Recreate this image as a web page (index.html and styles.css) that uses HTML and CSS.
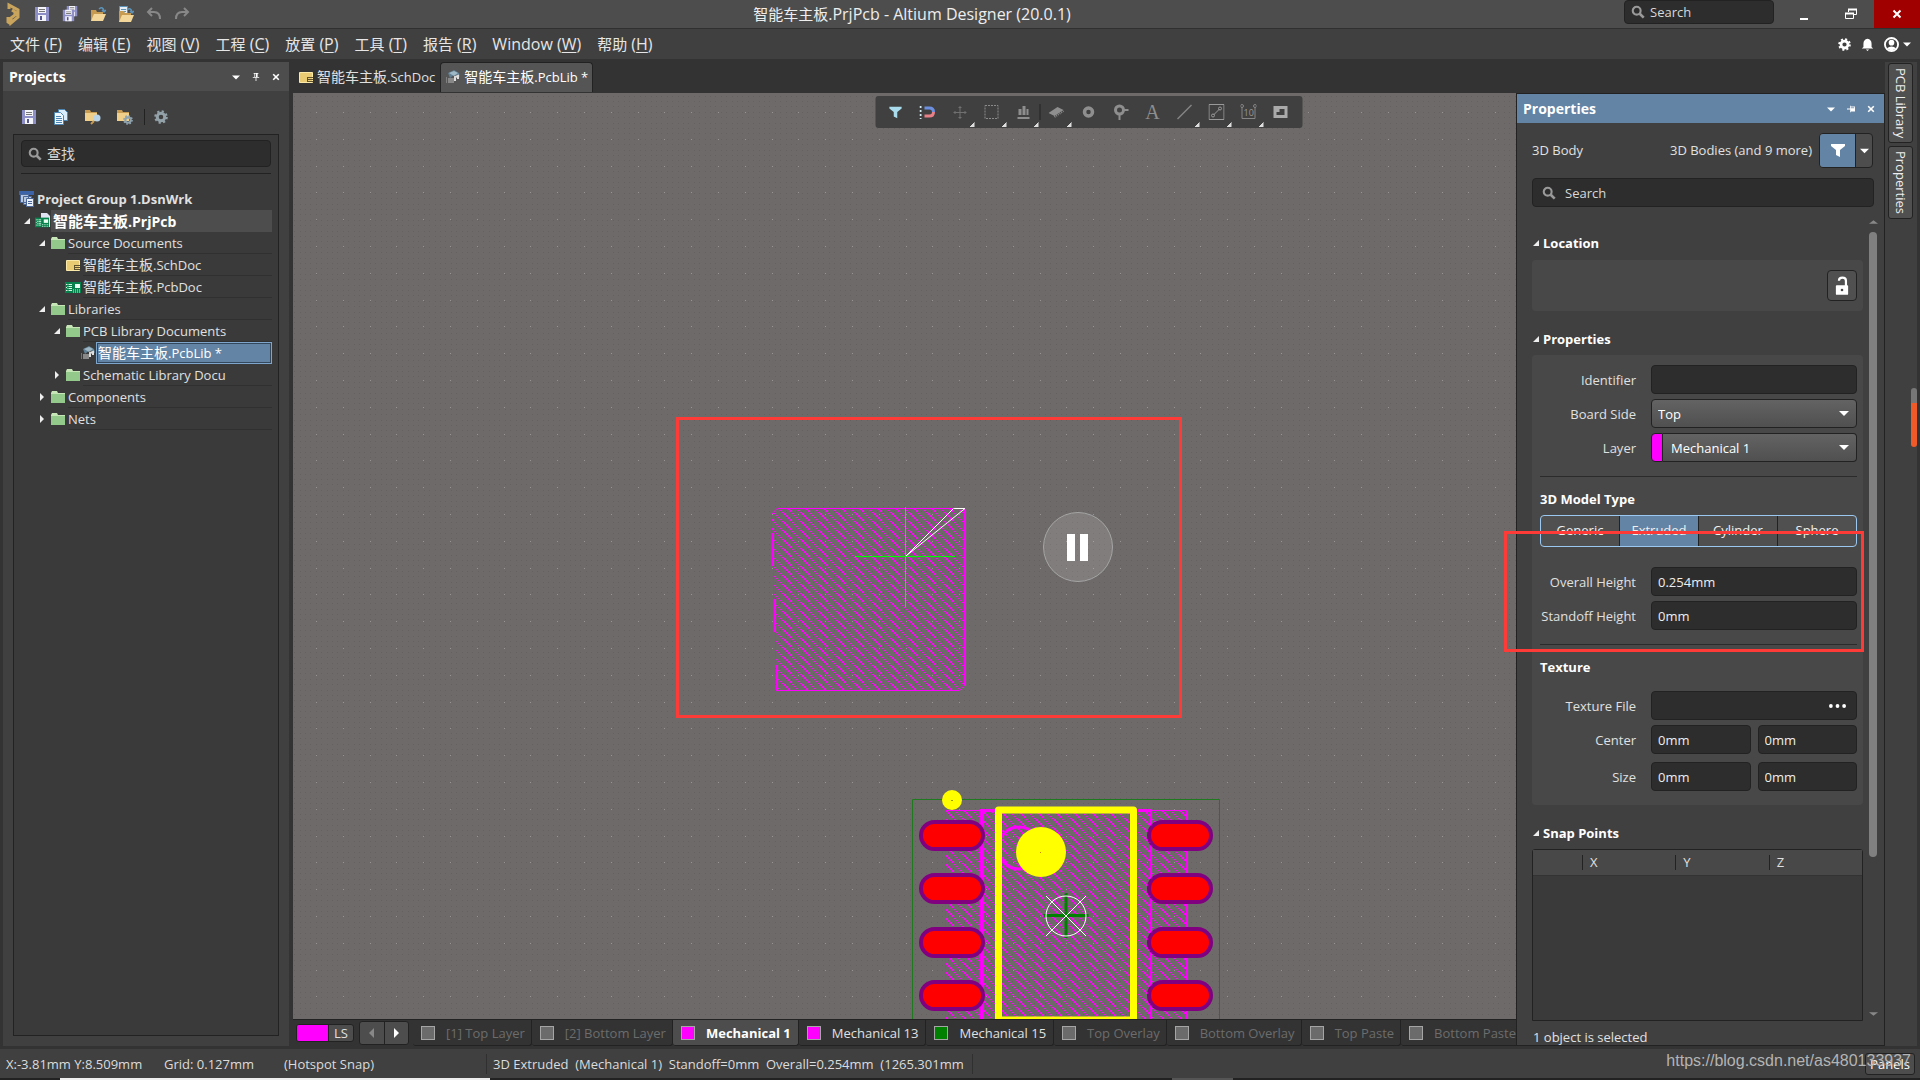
FILE: index.html
```html
<!DOCTYPE html>
<html lang="zh-CN">
<head>
<meta charset="utf-8">
<title>智能车主板.PrjPcb - Altium Designer (20.0.1)</title>
<link rel="stylesheet" href="styles.css">
</head>
<body>
<svg class="defs" width="0" height="0" aria-hidden="true">
  <defs>
    <symbol id="save" viewBox="0 0 16 16"><path fill="#8f8fc8" d="M1 1h14v14H1z"/><path fill="#f4f4fb" d="M4 1h8v6H4zM4 9h8v6H4z"/><path fill="#777" d="M5 3h6v1H5zM5 5h6v1H5z"/><path fill="#555590" d="M6 10h2v4H6z"/></symbol>
    <symbol id="folder" viewBox="0 0 16 16"><path fill="#c7e6b8" d="M1 4l1-2h5l1 2h7v10H1z"/><path fill="#93c98a" d="M1 5h14v9H1z"/></symbol>
    <symbol id="sch" viewBox="0 0 16 16"><path fill="#e9cb74" stroke="#fbe9a9" d="M1.500 3.500h13v10h-13z"/><path fill="#5e512c" d="M9 8h6v1H9zM9 10h6v1H9zM9 12h6v1H9zM9 8h1v5H9z"/></symbol>
    <symbol id="pcb" viewBox="0 0 16 16"><path fill="#07824d" d="M0 3h16v11H0z"/><path stroke="#cff3df" stroke-dasharray="1 1" d="M3 5v8M8 11h7M8 13h7"/><path stroke="#d8f5e4" d="M4 5.500h3M4 7.500h3M4 9.500h3M4 11.500h3M1 5.500h1M1 8.500h1M1 11.500h1"/><path fill="#e6fff1" d="M10 5h5v4h-5z"/></symbol>
    <symbol id="pcblib" viewBox="0 0 16 16"><path fill="#5f7f94" d="M3 4l6-3 5 3 1 4-5-3-5 4z"/><path fill="#9fb8c6" d="M4 4l5-2 4 2-4 3z"/><path fill="none" stroke="#ddd" stroke-width="2" d="M10 12V8l3-1v3"/><path fill="#888" d="M3 9h6v5H3z"/><path fill="#444" stroke="#aaa" d="M1 9h1M1 11h1M1 13h1"/></symbol>
    <symbol id="magnifier" viewBox="0 0 16 16"><circle cx="6.500" cy="6.500" r="4.500" fill="none" stroke="#9a9a9a" stroke-width="2.400"/><path stroke="#9a9a9a" stroke-width="3" d="M10 10l4.500 4.500"/></symbol>
    <symbol id="openfolder" viewBox="0 0 16 16"><path fill="#c79c52" d="M1 4h5l1 2h6v9H1z"/><path fill="#f3d79a" d="M4 8h12l-3 7H1z"/><path fill="none" stroke="#5d93b9" stroke-width="1.500" d="M9 3q4-3 5 2M12 4l2 2 2-2"/></symbol>
    <symbol id="cog" viewBox="0 0 16 16"><circle cx="8" cy="8" r="4.300" fill="none" stroke="currentColor" stroke-width="3.400"/><circle cx="8" cy="8" r="6.500" fill="none" stroke="currentColor" stroke-width="2.500" stroke-dasharray="2.500 2.600"/></symbol>
    <symbol id="folderbase" viewBox="0 0 16 16"><path fill="#c79c52" d="M0 1h5l1 2h6v9H0z"/><path fill="#f0cf8a" d="M0 4h12v8H0z"/></symbol>
    <symbol id="caret" viewBox="0 0 10 10"><path fill="currentColor" d="M0 3h10L5 8z"/></symbol>
    <symbol id="cross" viewBox="0 0 10 10"><path stroke="currentColor" stroke-width="2" d="M1.500 1.500l7 7M8.500 1.500l-7 7"/></symbol>
    <symbol id="opened" viewBox="0 0 8 8"><path fill="#eee" d="M7 1v6H1z"/></symbol>
    <symbol id="closed" viewBox="0 0 8 8"><path fill="#eee" d="M2 0l4 4-4 4z"/></symbol>
    <symbol id="funnel" viewBox="0 0 16 16"><path fill="currentColor" d="M1 2h14v2l-5 4v7l-4-2V8L1 4z"/></symbol>
  </defs>
</svg>

<header class="titlebar">
  <div class="quick">
    <svg class="logo" viewBox="0 0 16 24"><path fill="none" stroke="#c9a45c" stroke-width="3" d="M3 7V3l9 5v7l-7 6v-5l4-3V10L6 8M5 22l-3-2v-5"/></svg>
    <button class="iconbtn" aria-label="Save"><svg viewBox="0 0 16 16"><use href="#save"/></svg></button>
    <button class="iconbtn" aria-label="Save all"><svg viewBox="0 0 16 16"><use href="#save" x="4" y="-1" width="12" height="12"/><use href="#save" x="0" y="3" width="13" height="13"/></svg></button>
    <button class="iconbtn" aria-label="Open"><svg viewBox="0 0 16 16"><use href="#openfolder"/></svg></button>
    <button class="iconbtn" aria-label="Open project"><svg viewBox="0 0 16 16"><path fill="#e5eef5" stroke="#5d93b9" d="M1.500.5h8v11h-8z"/><path stroke="#5d93b9" d="M3 3.500h5M3 5.500h5"/><use href="#openfolder" y="1"/></svg></button>
    <button class="iconbtn" aria-label="Undo"><svg viewBox="0 0 16 16"><path fill="none" stroke="#888" stroke-width="2" d="M2 6h6q6 0 6 7M6 2L2 6l4 4"/></svg></button>
    <button class="iconbtn" aria-label="Redo"><svg viewBox="0 0 16 16"><path fill="none" stroke="#888" stroke-width="2" d="M14 6H8q-6 0-6 7M10 2l4 4-4 4"/></svg></button>
  </div>
  <h1 class="apptitle"><span class="zh">智能车主板</span>.PrjPcb - Altium Designer (20.0.1)</h1>
  <div class="winctl">
    <label class="search search-top"><svg viewBox="0 0 16 16"><use href="#magnifier"/></svg><input type="text" placeholder="Search" aria-label="Search"></label>
    <button class="win" aria-label="Minimize"><svg viewBox="0 0 12 12"><path fill="#fff" d="M2 10h8v2H2z"/></svg></button>
    <button class="win" aria-label="Restore"><svg viewBox="0 0 12 12"><path fill="none" stroke="#fff" d="M3.500 4V1.500h8v5H9M.5 5.500h8v5h-8z"/><path stroke="#fff" stroke-width="2" d="M3 1.500h9M0 5.500h9"/></svg></button>
    <button class="win close" aria-label="Close"><svg viewBox="0 0 10 10"><use href="#cross"/></svg></button>
  </div>
</header>

<nav class="menubar">
  <a href="#"><span class="zh">文件</span> (<u>F</u>)</a><a href="#"><span class="zh">编辑</span> (<u>E</u>)</a><a href="#"><span class="zh">视图</span> (<u>V</u>)</a><a href="#"><span class="zh">工程</span> (<u>C</u>)</a><a href="#"><span class="zh">放置</span> (<u>P</u>)</a><a href="#"><span class="zh">工具</span> (<u>T</u>)</a><a href="#"><span class="zh">报告</span> (<u>R</u>)</a><a href="#">Window (<u>W</u>)</a><a href="#"><span class="zh">帮助</span> (<u>H</u>)</a>
  <div class="account">
    <button class="iconbtn" aria-label="Settings"><svg viewBox="0 0 16 16"><use href="#cog"/></svg></button>
    <button class="iconbtn" aria-label="Notifications"><svg viewBox="0 0 16 16"><path fill="#fff" d="M8 1q5 1 5 6v4l2 2H1l2-2V7q0-5 5-6zM6 14h4l-2 2z"/></svg></button>
    <button class="iconbtn user" aria-label="Account"><svg viewBox="0 0 16 16"><circle cx="8" cy="8" r="7" fill="none" stroke="#fff" stroke-width="2"/><circle cx="8" cy="6" r="3" fill="#fff"/><path fill="#fff" d="M3 12q5-4 10 0l-5 3z"/></svg><svg class="tiny" viewBox="0 0 10 10"><use href="#caret"/></svg></button>
  </div>
</nav>

<main class="main">
  <aside class="projects">
    <div class="panelhead">
      <h2>Projects</h2>
      <button aria-label="Panel menu"><svg viewBox="0 0 10 10"><use href="#caret"/></svg></button>
      <button aria-label="Pin"><svg viewBox="0 0 10 10"><path fill="currentColor" d="M2 0h6v1H7v4h2v1H1V5h2V1H2zM4.500 6h1v4h-1z"/><path fill="#4d4d4d" d="M4 1h1v4H4z"/></svg></button>
      <button aria-label="Close panel"><svg viewBox="0 0 10 10"><use href="#cross"/></svg></button>
    </div>
    <div class="tools">
      <button class="iconbtn" aria-label="Save"><svg viewBox="0 0 16 16"><use href="#save"/></svg></button>
      <button class="iconbtn" aria-label="Compile"><svg viewBox="0 0 16 16"><path fill="#d9ecfa" stroke="#4d86b3" d="M5.500.5h6l3 3v8h-9z"/><path fill="#eef7fd" stroke="#4d86b3" d="M1.500 3.500h6l3 3v9h-9z"/><path stroke="#4d86b3" d="M3 7.500h5M3 9.500h6M3 11.500h6M3 13.500h6"/></svg></button>
      <button class="iconbtn" aria-label="Explore"><svg viewBox="0 0 16 16"><use href="#folderbase"/><circle cx="12" cy="9" r="3.500" fill="#b9d4e8"/><path stroke="#c79c52" stroke-width="2" d="M9 12l-3 3"/></svg></button>
      <button class="iconbtn" aria-label="Project options"><svg viewBox="0 0 16 16"><use href="#folderbase"/><g color="#8fa3ae"><use href="#cog" x="6" y="6" width="10" height="10"/></g></svg></button>
      <span class="vsep"></span>
      <button class="iconbtn gear" aria-label="Preferences"><svg viewBox="0 0 16 16"><use href="#cog"/></svg></button>
    </div>
    <div class="treebox">
      <label class="search"><svg viewBox="0 0 16 16"><use href="#magnifier"/></svg><input class="zh" type="text" placeholder="查找" aria-label="查找"></label>
      <ul class="tree">
        <li class="group"><svg viewBox="0 0 16 16"><path fill="#3c62a8" d="M0 0h15v4H0z"/><path fill="#b9c9e2" stroke="#4b6698" d="M1.500 3.500h8v8h-8zM4.500 5.500h8v8h-8z"/><path fill="#e9f0fa" stroke="#4b6698" d="M7.500 7.500h7v8h-7z"/><path stroke="#4b6698" d="M9 10.500h4M9 12.500h4"/></svg><b>Project Group 1.DsnWrk</b></li>
        <li class="prj"><svg class="arrow" viewBox="0 0 8 8"><use href="#opened"/></svg><svg viewBox="0 0 16 16"><path fill="#dfe3f2" d="M6 0h6l3 3v11H6z"/><use href="#pcb" y="2" width="14" height="14"/></svg><b class="fill"><span class="zh">智能车主板</span>.PrjPcb</b></li>
        <li class="l1"><svg class="arrow" viewBox="0 0 8 8"><use href="#opened"/></svg><svg viewBox="0 0 16 16"><use href="#folder"/></svg><span class="cell">Source Documents</span></li>
        <li class="l2"><i class="arrow"></i><svg viewBox="0 0 16 16"><use href="#sch"/></svg><span class="cell"><span class="zh">智能车主板</span>.SchDoc</span></li>
        <li class="l2"><i class="arrow"></i><svg viewBox="0 0 16 16"><use href="#pcb"/></svg><span class="cell"><span class="zh">智能车主板</span>.PcbDoc</span></li>
        <li class="l1"><svg class="arrow" viewBox="0 0 8 8"><use href="#opened"/></svg><svg viewBox="0 0 16 16"><use href="#folder"/></svg><span class="cell">Libraries</span></li>
        <li class="l2"><svg class="arrow" viewBox="0 0 8 8"><use href="#opened"/></svg><svg viewBox="0 0 16 16"><use href="#folder"/></svg><span class="cell">PCB Library Documents</span></li>
        <li class="l3"><i class="arrow"></i><svg viewBox="0 0 16 16"><use href="#pcblib"/></svg><span class="cell selected"><span class="zh">智能车主板</span>.PcbLib *</span></li>
        <li class="l2"><svg class="arrow" viewBox="0 0 8 8"><use href="#closed"/></svg><svg viewBox="0 0 16 16"><use href="#folder"/></svg><span class="cell">Schematic Library Docu</span></li>
        <li class="l1"><svg class="arrow" viewBox="0 0 8 8"><use href="#closed"/></svg><svg viewBox="0 0 16 16"><use href="#folder"/></svg><span class="cell">Components</span></li>
        <li class="l1"><svg class="arrow" viewBox="0 0 8 8"><use href="#closed"/></svg><svg viewBox="0 0 16 16"><use href="#folder"/></svg><span class="cell">Nets</span></li>
      </ul>
    </div>
  </aside>

  <section class="center">
    <div class="doctabs">
      <button class="doctab"><svg viewBox="0 0 16 16"><use href="#sch"/></svg><span><span class="zh">智能车主板</span>.SchDoc</span></button>
      <button class="doctab active"><svg viewBox="0 0 16 16"><use href="#pcblib"/></svg><span><span class="zh">智能车主板</span>.PcbLib *</span></button>
    </div>
    <div class="workspace">
      <div class="editor">
        <div class="canvas">
          <svg class="board" width="100%" height="100%" role="img" aria-label="PCB footprint">
            <defs>
              <pattern id="minor" x="316" y="112" width="27" height="27" patternUnits="userSpaceOnUse">
                <path id="dotrow" stroke="#656160" d="M0 .5h1m4 0h1m5 0h1m4 0h1m4 0h1"/>
                <use href="#dotrow" y="5"/><use href="#dotrow" y="11"/><use href="#dotrow" y="16"/><use href="#dotrow" y="21"/>
              </pattern>
              <pattern id="major" x="316" y="112" width="134" height="134" patternUnits="userSpaceOnUse">
                <path id="bigrow" stroke="#979493" d="M0 .5h1m26 0h1m26 0h1m25 0h1m26 0h1"/>
                <use href="#bigrow" y="27"/><use href="#bigrow" y="54"/><use href="#bigrow" y="80"/><use href="#bigrow" y="107"/>
              </pattern>
              <pattern id="hatch" x="945" y="810" width="9" height="9" patternUnits="userSpaceOnUse">
                <path fill="#f0f" shape-rendering="crispEdges" d="M0 0h2v1H0zM1 1h1v1H1zM2 2h2v1H2zM3 3h1v1H3zM4 4h2v1H4zM5 5h1v1H5zM6 6h2v1H6zM7 7h1v1H7zM8 8h1v1H8z"/>
              </pattern>
            </defs>
            <g transform="translate(-293 -93)">
              <g shape-rendering="crispEdges">
                <rect x="293" y="93" width="4000" height="3000" fill="url(#minor)"/>
                <rect x="293" y="93" width="4000" height="3000" fill="url(#major)"/>
              </g>
              <path fill="url(#hatch)" d="M777 508h188v177l-5 5H777l-6-176z"/>
              <path fill="none" stroke="#f0f" d="M964.500 508v177.500l-5 5M771.500 514v19m1 0v33m1 0v33m1 0v33m1 0v33m1 0v26"/>
              <path fill="none" stroke="#f0f" d="M771 515l6-6.500h188M776 690.500h184"/>
              <path fill="none" stroke="#0f0" d="M855 556.500h100M905.500 507v100"/>
              <path fill="none" stroke="#fff" d="M906 556l47.500-47.500h11.500z"/>
              <path fill="none" stroke="#1f7a1f" d="M912.500 1100V799.500h307V1100"/>
              <path fill="url(#hatch)" stroke="#f0f" d="M945.500 1100V810.500h241V1100"/>
              <path fill="none" stroke="#f0f" stroke-width="3" d="M981.500 1100V810.500h169V1100"/>
              <circle cx="1019" cy="848" r="21" fill="none" stroke="#f0f" stroke-width="3"/>
              <rect x="998.500" y="810" width="135" height="210" fill="none" stroke="#ff0" stroke-width="7" stroke-linejoin="round"/>
              <circle cx="1041" cy="852" r="25" fill="#ff0"/><path stroke="#c80" d="M1040 852.500h1"/>
              <circle cx="952" cy="800" r="10" fill="#ff0"/><path stroke="#990" d="M951 800.500h2"/>
              <g fill="#f00" stroke="#800080" stroke-width="4">
                <rect id="pad" x="921" y="822" width="62" height="27" rx="13.500"/>
                <use href="#pad" y="53"/><use href="#pad" y="107"/><use href="#pad" y="160"/>
                <use href="#pad" x="228"/><use href="#pad" x="228" y="53"/><use href="#pad" x="228" y="107"/><use href="#pad" x="228" y="160"/>
              </g>
              <path stroke="#008000" stroke-width="3" d="M1043.500 915.500h45M1066 893v45"/>
              <g fill="none" stroke="#fff"><circle cx="1066" cy="916" r="20"/><path d="M1046 896l40 40M1086 896l-40 40"/></g>
              <circle cx="1078" cy="547" r="34.500" fill="#fff" fill-opacity=".13" stroke="#a5a5a5"/>
              <path fill="#fff" d="M1067 534h8v27h-8zM1080 534h8v27h-8z"/>
              <rect x="677.500" y="418.500" width="503" height="298" fill="none" stroke="#ff3b38" stroke-width="3"/>
            </g>
          </svg>
        </div>
        <div class="layers">
          <button class="ls"><i></i><span>LS</span></button>
          <div class="pager"><button aria-label="Previous"><svg viewBox="0 0 8 10"><path fill="#888" d="M6 0v10L1 5z"/></svg></button><button aria-label="Next"><svg viewBox="0 0 8 10"><path fill="#fff" d="M2 0v10l5-5z"/></svg></button></div>
          <button class="layer off"><i></i>[1] Top Layer</button>
          <button class="layer off"><i></i>[2] Bottom Layer</button>
          <button class="layer mech current"><i></i>Mechanical 1</button>
          <button class="layer mech"><i></i>Mechanical 13</button>
          <button class="layer green"><i></i>Mechanical 15</button>
          <button class="layer off"><i></i>Top Overlay</button>
          <button class="layer off"><i></i>Bottom Overlay</button>
          <button class="layer off"><i></i>Top Paste</button>
          <button class="layer off"><i></i>Bottom Paste</button>
        </div>
      </div>

      <aside class="props">
        <div class="panelhead focus">
          <h2>Properties</h2>
          <button aria-label="Panel menu"><svg viewBox="0 0 10 10"><use href="#caret"/></svg></button>
          <button aria-label="Unpin"><svg viewBox="0 0 10 10"><path fill="currentColor" d="M0 4.500h4v1H0zM4 1h1v1h5v6H5v1H4z"/><path fill="#6384a4" d="M5 3h4v1H5z"/></svg></button>
          <button aria-label="Close panel"><svg viewBox="0 0 10 10"><use href="#cross"/></svg></button>
        </div>
        <div class="scope">
          <span>3D Body</span><span class="right">3D Bodies (and 9 more)</span>
          <div class="split"><button class="filter" aria-label="Filter"><svg viewBox="0 0 16 16"><use href="#funnel"/></svg></button><button class="more" aria-label="Filter options"><svg viewBox="0 0 10 10"><use href="#caret"/></svg></button></div>
        </div>
        <label class="search search-props"><svg viewBox="0 0 16 16"><use href="#magnifier"/></svg><input type="text" placeholder="Search" aria-label="Search properties"></label>
        <div class="scroller">
          <div class="sections">
            <h3 class="first"><svg viewBox="0 0 8 8"><use href="#opened"/></svg>Location</h3>
            <div class="card location"><button aria-label="Unlock"><svg viewBox="0 0 16 22"><path fill="none" stroke="#fff" stroke-width="2.500" d="M4.500 5q0-3.500 4-3.500t4 3.500v6"/><rect x="1" y="10" width="14" height="11" rx="1" fill="#fff"/><circle cx="8" cy="15.500" r="1.500" fill="#444"/></svg></button></div>
            <h3><svg viewBox="0 0 8 8"><use href="#opened"/></svg>Properties</h3>
            <div class="card fields">
              <div class="row"><label for="ident">Identifier</label><input id="ident" type="text"></div>
              <div class="row"><label for="side">Board Side</label><select id="side"><option>Top</option></select></div>
              <div class="row"><label for="layer">Layer</label><div class="layerpick"><i></i><select id="layer"><option>Mechanical 1</option></select></div></div>
              <hr>
              <h4>3D Model Type</h4>
              <div class="segments"><button>Generic</button><button class="on">Extruded</button><button>Cylinder</button><button>Sphere</button></div>
              <div class="row"><label for="overall">Overall Height</label><input id="overall" type="text" value="0.254mm"></div>
              <div class="row"><label for="standoff">Standoff Height</label><input id="standoff" type="text" value="0mm"></div>
              <hr>
              <h4>Texture</h4>
              <div class="row texfile"><label for="texture">Texture File</label><div class="filepick"><input id="texture" type="text"><button aria-label="Browse"><svg viewBox="0 0 18 4"><g fill="#fff"><circle cx="2" cy="2" r="2"/><circle cx="9" cy="2" r="2"/><circle cx="16" cy="2" r="2"/></g></svg></button></div></div>
              <div class="row"><label for="cx">Center</label><div class="pair"><input id="cx" type="text" value="0mm"><input type="text" value="0mm" aria-label="Center Y"></div></div>
              <div class="row last"><label for="sx">Size</label><div class="pair"><input id="sx" type="text" value="0mm"><input type="text" value="0mm" aria-label="Size Y"></div></div>
            </div>
            <h3><svg viewBox="0 0 8 8"><use href="#opened"/></svg>Snap Points</h3>
            <div class="snapbox"><table class="snap"><thead><tr><th class="idx"></th><th>X</th><th>Y</th><th>Z</th></tr></thead></table></div>
          </div>
          <div class="scrollbar"><svg viewBox="0 0 10 6"><path fill="#888" d="M0 5l5-4 5 4z"/></svg><div class="track"><i></i></div><svg viewBox="0 0 10 6"><path fill="#888" d="M0 1l5 4 5-4z"/></svg></div>
        </div>
        <p class="selection">1 object is selected</p>
        <div class="callout"></div>
      </aside>

      <div class="activebar">
        <button class="lit" aria-label="Selection filter"><svg viewBox="0 0 16 16"><use href="#funnel"/></svg></button>
        <button aria-label="Snapping"><svg viewBox="0 0 16 16"><path fill="none" stroke="#6d8fe0" stroke-width="3" d="M5 4h5q4 0 4 4"/><path fill="none" stroke="#e78087" stroke-width="3" d="M5 12h5q4 0 4-4"/><path stroke="#cfe9ee" stroke-width="2" stroke-dasharray="2 2" d="M1 2v13"/></svg></button>
        <button class="sub" aria-label="Move"><svg viewBox="0 0 16 16"><path stroke="#707070" fill="none" d="M8.500 2v13M2 8.500h13M7 3.500h3M7 13.500h3M3.500 7v3M13.500 7v3"/></svg></button>
        <button class="sub" aria-label="Select area"><svg viewBox="0 0 16 16"><path fill="none" stroke="#8a8a8a" stroke-dasharray="2 1" d="M1.500 1.500h13v13h-13z"/></svg></button>
        <button class="sub" aria-label="Align"><svg viewBox="0 0 16 16"><path fill="#8e8e8e" d="M3 5h3v6H3zM7 2h3v9H7zM11 5h2v6h-2zM2 13h12v2H2z"/></svg></button>
        <span class="vsep"></span>
        <button class="sub" aria-label="Component"><svg viewBox="0 0 16 16"><path fill="#8e8e8e" d="M0 9l9-6 6 3-9 6z"/><path stroke="#888" stroke-width="2" stroke-dasharray="1 1" d="M6 13l9-6"/></svg></button>
        <button aria-label="Pad"><svg viewBox="0 0 16 16"><circle cx="8" cy="8" r="4" fill="none" stroke="#8e8e8e" stroke-width="3.500"/></svg></button>
        <button aria-label="Via"><svg viewBox="0 0 16 16"><circle cx="7" cy="6" r="4" fill="none" stroke="#8e8e8e" stroke-width="3"/><path stroke="#8e8e8e" stroke-width="2" d="M11 6h6M7 10v6"/></svg></button>
        <button class="letter" aria-label="String">A</button>
        <button class="sub" aria-label="Line"><svg viewBox="0 0 16 16"><path stroke="#858585" stroke-width="1.500" d="M1 15L15 1"/></svg></button>
        <button class="sub" aria-label="Track"><svg viewBox="0 0 16 16"><path fill="none" stroke="#999" d="M.5.5h15v15H.5zM5 11l6-6"/><circle cx="4.500" cy="11.500" r="1.500" fill="none" stroke="#999"/><circle cx="11.500" cy="4.500" r="1.500" fill="none" stroke="#999"/></svg></button>
        <button class="sub dim" aria-label="Dimension"><svg viewBox="0 0 16 16"><path fill="none" stroke="#858585" d="M1.500 3v11.500h13V3"/><circle cx="1.500" cy="2" r="1.500" fill="none" stroke="#858585"/><circle cx="14.500" cy="2" r="1.500" fill="none" stroke="#858585"/><text x="3" y="12" font-size="9" fill="#999">10</text></svg></button>
        <button aria-label="Region"><svg viewBox="0 0 16 16"><path fill="#aaa" fill-rule="evenodd" d="M1 2h14v12H1zM4 11h8V5H7v3H4z"/></svg></button>
      </div>
    </div>
  </section>

  <nav class="sidetabs">
    <button>PCB Library</button>
    <button>Properties</button>
    <i class="marker"></i>
  </nav>
</main>

<footer class="status">
  <span class="coords">X:-3.81mm Y:8.509mm</span><span class="grid">Grid: 0.127mm</span><span class="snapmode">(Hotspot Snap)</span>
  <span class="info">3D Extruded&nbsp; (Mechanical 1)&nbsp; Standoff=0mm&nbsp; Overall=0.254mm&nbsp; (1265.301mm</span>
  <button class="panels">Panels</button>
  <span class="credit">https://blog.csdn.net/as480133937</span>
</footer>
<div class="taskbar"><i></i><b></b></div>
</body>
</html>
```
FILE: styles.css
```css
* { box-sizing: border-box; }
html, body { height: 100%; margin: 0; }
body {
  display: flex; flex-direction: column; overflow: hidden;
  background: #333; color: #e0e0e0;
  font: 13px/20px "Open Sans", "Noto Sans CJK SC", sans-serif;
}
h1, h2, h3, h4, p, ul { margin: 0; padding: 0; font-weight: 400; }
button, input, select { font: inherit; color: inherit; margin: 0; padding: 0; border: 0; background: none; }
button { display: flex; align-items: center; justify-content: center; }
svg { display: block; flex: none; }
.defs { position: absolute; }
.zh { font-size: 14px; }
.apptitle .zh, .menubar .zh, .prj .zh { font-size: 15px; }

/* Title bar */
.titlebar {
  display: grid; grid-template-columns: 1fr auto 1fr; flex: none; height: 29px;
  background: #4d4d4d; border-bottom: 1px solid #303030;
}
.quick { display: flex; align-items: center; gap: 12px; padding-left: 6px; }
.logo { width: 16px; height: 24px; }
.iconbtn svg { width: 16px; height: 16px; }
.apptitle { margin-right: 96px; color: #eee; font-size: 16px; line-height: 28px; }
.winctl { display: flex; justify-content: flex-end; }
.search {
  display: flex; align-items: center; gap: 5px; background: #2d2d2d;
  border: 1px solid #222; border-radius: 4px; padding: 0 6px;
}
.search svg { width: 14px; height: 14px; }
.search input { flex: 1; min-width: 0; outline: none; }
.search input::placeholder { color: #d8d8d8; opacity: 1; }
.search-top { width: 150px; height: 24px; margin-right: 6px; }
.win { width: 47px; height: 28px; }
.win svg { width: 12px; height: 12px; }
.win.close { background: #a00000; color: #fff; width: 46px; }
.win.close svg { width: 10px; height: 10px; }

/* Menu bar */
.menubar {
  display: flex; align-items: center; gap: 16px; flex: none; height: 30px; padding: 0 9px 0 10px;
  background: #404040; font-size: 16px;
}
.menubar a { color: #e6e6e6; text-decoration: none; white-space: nowrap; }
.menubar u { text-underline-offset: 2px; }
.account { display: flex; gap: 10px; margin-left: auto; color: #fff; }
.account svg { width: 13px; height: 13px; }
.user { gap: 4px; }
.user svg { width: 15px; height: 15px; }
.user .tiny { width: 8px; height: 8px; }

/* Projects panel */
.main { display: flex; flex: 1; min-height: 0; padding: 0 3px 3px; }
.projects { display: flex; flex-direction: column; flex: none; width: 286px; margin-top: 3px; background: #404040; }
.panelhead { display: flex; align-items: center; flex: none; height: 29px; gap: 10px; padding: 0 8px 0 6px; background: #4d4d4d; color: #fff; }
.panelhead h2 { flex: 1; font-size: 14px; font-weight: 700; }
.panelhead svg { width: 8px; height: 10px; }
.panelhead button { width: 10px; height: 20px; }
.tools { display: flex; align-items: center; gap: 16px; height: 43px; padding: 9px 18px 0; }
.tools .vsep { margin: 0 -7px 0 -5px; }
.vsep { width: 1px; height: 16px; background: #222; }
.gear { color: #93a1a8; }
.gear svg { width: 14px; height: 14px; }
.treebox { flex: 1; margin: 0 10px 10px; border: 1px solid #222; padding: 5px 7px; background: #3a3a3a; }
.treebox .search { height: 27px; }
.tree { list-style: none; margin-top: 6px; padding-top: 14px; border-top: 1px solid #222; }
.tree li { display: flex; align-items: center; height: 22px; gap: 2px; margin-right: -1px; }
.tree svg { width: 16px; height: 16px; }
.tree .arrow { width: 8px; height: 8px; margin-right: 2px; flex: none; }
.group { margin-left: -2px; }
.prj { padding-left: 2px; }
.prj .fill { flex: 1; align-self: stretch; background: #4d4d4d; color: #fff; margin-left: -2px; padding-left: 2px; font-size: 14px; line-height: 22px; }
.l1 { padding-left: 17px; }
.l2 { padding-left: 32px; }
.l3 { padding-left: 47px; }
.cell { flex: 1; height: 22px; line-height: 22px; border-bottom: 1px solid #303030; white-space: nowrap; overflow: hidden; }
.selected { border: 1px solid #7ea6cc; background: #6384a4; color: #fff; line-height: 20px; box-shadow: inset 0 0 0 1px #33485c; margin-left: -2px; padding-left: 1px; }

/* Documents and editor */
.center { display: flex; flex-direction: column; flex: 1; min-width: 0; margin-left: 4px; }
.doctabs { display: flex; align-items: flex-end; flex: none; height: 34px; }
.doctab { height: 30px; gap: 3px; padding: 0 4px 1px; border: 1px solid transparent; margin-bottom: 1px; }
.doctab svg { width: 16px; height: 16px; }
.doctab.active { background: #555; border-color: #222; border-bottom: 0; border-radius: 4px 4px 0 0; color: #fff; }
.workspace { display: flex; flex: 1; min-height: 0; position: relative; }
.editor { display: flex; flex-direction: column; flex: 1; min-width: 0; }
.canvas { flex: 1; min-height: 0; background: #6e6a69; overflow: hidden; }
.layers { display: flex; align-items: center; flex: none; height: 27px; overflow: hidden; white-space: nowrap; border-top: 1px solid #222; background: #333; }
.ls { flex: none; width: 58px; height: 18px; margin: 0 5px 0 3px; border: 1px solid #222; border-radius: 3px; background: #4d4d4d; overflow: hidden; }
.ls i { width: 32px; height: 18px; background: #f0f; border-right: 1px solid #222; }
.ls span { flex: 1; }
.pager { display: flex; flex: none; width: 50px; height: 24px; margin-right: 4px; border: 1px solid #222; border-radius: 3px; background: #4d4d4d; }
.pager button { flex: 1; }
.pager button + button { border-left: 1px solid #222; }
.pager svg { width: 8px; height: 10px; }
.layer { flex: none; height: 26px; gap: 11px; padding: 0 7px 0 8px; border: solid #222; border-width: 0 1px 1px 0; border-radius: 0 0 3px 3px; }
.layer i { width: 14px; height: 14px; background: #6b6b6b; border: 1px solid #a5a5a5; }
.off { color: #6c6c6c; padding-right: 6px; }
.mech i { background: #f0f; }
.green i { background: #008000; }
.current { background: #4d4d4d; color: #fff; font-weight: 700; }

.activebar {
  position: absolute; top: 3px; left: 50%; transform: translateX(-50%);
  display: flex; align-items: center; height: 32px; padding: 0 6px 0 4px; background: #404040; border-radius: 3px;
}
.activebar button { position: relative; width: 32px; height: 32px; }
.activebar svg { width: 16px; height: 16px; }
.activebar .lit { color: #a9dcec; }
.activebar .lit svg { width: 14px; height: 14px; }
.sub::after { content: ""; position: absolute; right: 1px; bottom: 1px; width: 5px; height: 5px; background: linear-gradient(135deg, transparent 50%, #ddd 50%); }
.letter { font: 20px/32px "Liberation Serif", serif; color: #8e8e8e; }

/* Properties panel */
.props { position: relative; display: flex; flex-direction: column; flex: none; width: 369px; border: 1px solid #222; background: #404040; }
.panelhead.focus { background: #6384a4; }
.scope { display: flex; align-items: center; height: 54px; padding: 0 11px 0 15px; }
.scope .right { margin-left: auto; }
.split { display: flex; width: 54px; height: 35px; margin-left: 7px; border: 1px solid #222; border-radius: 4px; overflow: hidden; background: #4d4d4d; color: #fff; }
.filter { flex: 1; background: #6384a4; }
.filter svg { width: 16px; height: 16px; }
.more { width: 17px; border-left: 1px solid #222; }
.more svg { width: 9px; height: 9px; }
.search-props { flex: none; height: 29px; margin: 1px 10px 0 15px; padding: 0 9px; gap: 9px; }
.scroller { display: flex; flex: 1; min-height: 0; padding: 12px 6px 0 15px; }
.sections { flex: 1; min-width: 0; display: flex; flex-direction: column; }
h3 { display: flex; align-items: center; gap: 3px; height: 44px; padding-top: 11px; color: #fff; font-size: 13px; font-weight: 700; flex: none; }
h3.first { height: 41px; padding-top: 6px; }
h3 svg { width: 8px; height: 8px; }
.card { flex: none; background: #484848; border-radius: 4px; }
.location { display: flex; justify-content: flex-end; align-items: center; height: 51px; padding-right: 6px; }
.location button { width: 30px; height: 31px; border: 1px solid #222; border-radius: 4px; background: #505050; }
.location svg { width: 14px; height: 20px; }
.fields { display: flex; flex-direction: column; gap: 5px; padding: 10px 6px 14px 8px; }
.row { display: grid; grid-template-columns: 96px 1fr; column-gap: 15px; align-items: center; height: 29px; }
.row label { text-align: right; white-space: nowrap; }
.row input, .row select { width: 100%; min-width: 0; height: 29px; padding: 0 6px; border: 1px solid #222; border-radius: 4px; background: #2d2d2d; color: #eee; outline: none; }
.row select {
  appearance: none; padding: 0 6px; color: #fff;
  background: url("data:image/svg+xml,%3Csvg xmlns='http://www.w3.org/2000/svg' width='10' height='5'%3E%3Cpath fill='white' d='M0 0h10L5 5z'/%3E%3C/svg%3E") right 7px center no-repeat, linear-gradient(#636363, #505050);
}
.layerpick { display: flex; height: 29px; }
.layerpick i { flex: none; width: 12px; background: #f0f; border: 1px solid #222; border-radius: 4px 0 0 4px; }
.row .layerpick select { border-left: 0; border-radius: 0 4px 4px 0; padding-left: 8px; }
hr { width: 100%; height: 1px; margin: 8px 0 0; border: 0; background: #2b2b2b; }
h4 { height: 28px; line-height: 34px; color: #fff; font-size: 13px; font-weight: 700; }
.segments { display: flex; height: 32px; margin-bottom: 15px; border: 1px solid #9bc8f0; border-radius: 4px; background: #505050; overflow: hidden; }
.segments button { flex: 1; padding-bottom: 2px; border-left: 1px solid #222; color: #f0f0f0; }
.segments button:first-child { border-left: 0; }
.segments .on { background: #6384a4; }
.row + hr { margin-top: 9px; }
.texfile { margin-top: 8px; }
.filepick { position: relative; }
.filepick button { position: absolute; right: 8px; top: 0; width: 24px; height: 29px; }
.filepick svg { width: 17px; height: 4px; }
.pair { display: grid; grid-template-columns: 1fr 1fr; gap: 7px; }
.last { margin-top: 3px; }
.snapbox { flex: 1; border: 1px solid #222; border-radius: 3px 3px 0 0; background: #3a3a3a; margin-bottom: 4px; }
.snap { width: 100%; table-layout: fixed; border-collapse: collapse; background: #484848; border-bottom: 1px solid #333; }
.snap th { height: 25px; padding: 0 0 0 8px; text-align: left; font-weight: 400; background: linear-gradient(#222, #222) left center / 1px 15px no-repeat; }
.snap .idx { width: 49px; background: none; }
.scrollbar { display: flex; flex-direction: column; align-items: center; width: 10px; margin-left: 5px; padding-bottom: 8px; }
.scrollbar svg { width: 9px; height: 6px; }
.track { flex: 1; width: 8px; margin: 7px 0; }
.track i { display: block; height: 81%; border-radius: 4px; background: #808080; }
.selection { height: 20px; padding-left: 16px; line-height: 24px; overflow: hidden; }
.callout { position: absolute; left: -13px; top: 437px; width: 360px; height: 121px; border: 3px solid #ff3b38; pointer-events: none; }

/* Side tabs */
.sidetabs { position: relative; display: flex; flex-direction: column; gap: 3px; flex: none; width: 32px; margin-top: 3px; padding: 1px 4px 0 3px; background: #404040; }
.sidetabs button { writing-mode: vertical-rl; width: 25px; padding: 4px 0; border: 1px solid #222; border-radius: 3px; background: #505050; color: #eee; }
.marker { position: absolute; right: 0; top: 326px; width: 6px; height: 59px; border-radius: 3px; background: linear-gradient(#777 15px, #f05a28 15px); }

/* Status bar */
.status { display: flex; align-items: center; position: relative; flex: none; height: 29px; padding: 0 5px 0 6px; background: #404040; color: #dcdcdc; white-space: nowrap; }
.coords { width: 158px; }
.grid { width: 120px; }
.snapmode { width: 203px; border-right: 1px solid #303030; }
.info { width: 480px; margin-left: 6px; overflow: hidden; border-right: 1px solid #303030; }
.panels { width: 50px; height: 22px; margin-left: auto; border: 1px solid #222; border-radius: 3px; background: #4d4d4d; color: #fff; }
.credit { position: absolute; right: 9px; top: 1px; font: 16px/22px "Liberation Sans", sans-serif; color: #b4b4b4; }
.taskbar { display: flex; flex: none; height: 2px; background: #222; padding-left: 60px; }
.taskbar i { width: 430px; background: #eee; }
.taskbar b { width: 61px; margin-left: 682px; background: #555; }
```
